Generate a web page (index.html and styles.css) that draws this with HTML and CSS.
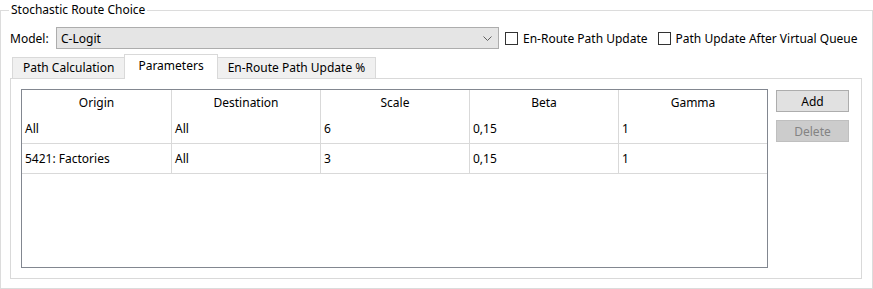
FILE: index.html
```html
<!DOCTYPE html>
<html lang="en">
<head>
    <meta charset="UTF-8">
    <title>Stochastic Route Choice</title>
    <link rel="stylesheet" href="styles.css">
</head>
<body>
<fieldset class="group">
    <legend class="group-title">Stochastic Route Choice</legend>

    <div class="model-row">
        <label class="model-label" for="model">Model:</label>
        <div class="combo" id="model">
            <span>C-Logit</span>
            <svg class="chevron" width="9" height="5" viewBox="0 0 9 5">
                <path d="M0.5 0.5 L4.5 4.5 L8.5 0.5" fill="none" stroke="#606060" stroke-width="1"/>
            </svg>
        </div>
        <label class="check"><span class="box"></span>En-Route Path Update</label>
        <label class="check"><span class="box"></span>Path Update After Virtual Queue</label>
    </div>

    <div class="tabs">
        <div class="tab">Path Calculation</div>
        <div class="tab active">Parameters</div>
        <div class="tab">En-Route Path Update %</div>
    </div>

    <div class="pane">
        <div class="grid">
            <div class="row head">
                <div class="cell">Origin</div>
                <div class="cell">Destination</div>
                <div class="cell">Scale</div>
                <div class="cell">Beta</div>
                <div class="cell">Gamma</div>
            </div>
            <div class="row">
                <div class="cell">All</div>
                <div class="cell">All</div>
                <div class="cell">6</div>
                <div class="cell">0,15</div>
                <div class="cell">1</div>
            </div>
            <div class="row">
                <div class="cell">5421: Factories</div>
                <div class="cell">All</div>
                <div class="cell">3</div>
                <div class="cell">0,15</div>
                <div class="cell">1</div>
            </div>
        </div>
        <div class="buttons">
            <button class="btn">Add</button>
            <button class="btn" disabled>Delete</button>
        </div>
    </div>
</fieldset>
</body>
</html>
```

FILE: styles.css
```css
*{
    box-sizing: border-box;
}
body{
    margin:0;
    background:#fff;
    font-family:"Noto Sans", "Open Sans", sans-serif;
    font-size:12px;
    color:#000;
    width:873px;
    height:289px;
    overflow:hidden;
}

.group{
    margin:0;
    margin-top:2px;
    border:1px solid #dcdcdc;
    padding:0 10px 9px 9px;
    height:287px;
}
.group-title{
    padding:0 2px;
    margin-left:-1px;
    line-height:16px;
}

.model-row{
    display:flex;
    align-items:center;
    margin-top:9px;
    height:22px;
}
.model-label{
    width:46px;
}
.combo{
    width:443px;
    height:22px;
    background:#e5e5e5;
    border:1px solid #adadad;
    display:flex;
    align-items:center;
    justify-content:space-between;
    padding:0 6px 0 4px;
}
.chevron{
    margin-top:1px;
}
.check{
    display:flex;
    align-items:center;
    margin-left:6px;
    margin-right:4px;
}
.check .box{
    width:13px;
    height:13px;
    border:1px solid #333;
    background:#fff;
    margin-right:5px;
}

.tabs{
    display:flex;
    margin-top:6px;
    height:23px;
    align-items:flex-end;
    padding-left:2px;
    position:relative;
    z-index:1;
}
.tab{
    height:21px;
    padding:0 10px;
    line-height:20px;
    background:#f0f0f0;
    border:1px solid #d9d9d9;
    border-bottom:none;
    margin-right:-1px;
}
.tab.active{
    height:25px;
    margin-bottom:-1px;
    background:#fff;
    line-height:22px;
    padding:0 13px;
}

.pane{
    border:1px solid #d9d9d9;
    background:#fff;
    height:201px;
    padding:10px 11px 10px 10px;
    display:flex;
    gap:8px;
}

.grid{
    width:747px;
    height:179px;
    border:1px solid #828790;
}
.row{
    display:grid;
    grid-template-columns:150px 149px 149px 149px 148px;
    height:30px;
    border-bottom:1px solid #d9d9d9;
}
.row.head{
    height:24px;
    border-bottom:none;
}
.cell{
    border-right:1px solid #d9d9d9;
    padding:0 3px;
    display:flex;
    align-items:center;
}
.cell:last-child{
    border-right:none;
}
.head .cell{
    justify-content:center;
    padding-top:1px;
}

.buttons{
    display:flex;
    flex-direction:column;
    gap:8px;
    padding-top:1px;
}
.btn{
    width:73px;
    height:22px;
    font-family:inherit;
    font-size:12px;
    background:#e1e1e1;
    border:1px solid #adadad;
    color:#000;
    padding:0;
}
.btn:disabled{
    background:#cccccc;
    border-color:#bfbfbf;
    color:#838383;
}
```
